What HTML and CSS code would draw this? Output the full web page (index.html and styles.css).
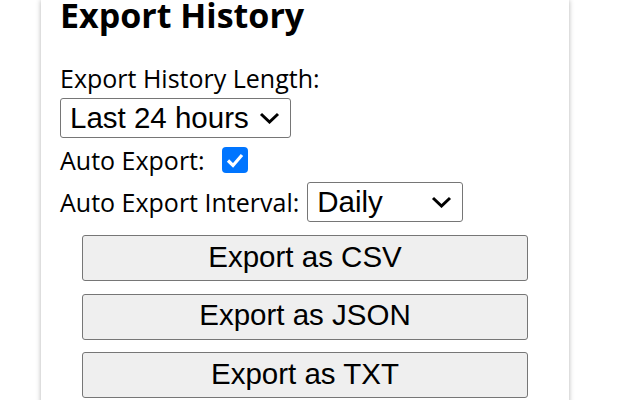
FILE: index.html
```html
<!DOCTYPE html>
<html lang="en">
<head>
<meta charset="utf-8">
<title>Export History</title>
<link rel="stylesheet" href="styles.css">
</head>
<body>
<div class="panel">
  <h2 class="title">Export History</h2>
  <div class="field">
    <label class="lbl">Export History Length:</label>
    <span class="select sel-length">
      <span class="sel-text">Last 24 hours</span>
      <svg class="chev" viewBox="0 0 21 12" width="21" height="12"><path d="M2 2 L10.5 10 L19 2" fill="none" stroke="#000" stroke-width="3"/></svg>
    </span>
  </div>
  <div class="row row-check">
    <label class="lbl">Auto Export:</label>
    <span class="cb">
      <svg viewBox="0 0 26 26" width="26" height="26"><rect x="0" y="0" width="26" height="26" rx="4" fill="#0075ff"/><path d="M6 13.5 L11 18.5 L20 8" fill="none" stroke="#fff" stroke-width="3.2"/></svg>
    </span>
  </div>
  <div class="row row-interval">
    <label class="lbl">Auto Export Interval:</label>
    <span class="select sel-interval">
      <span class="sel-text">Daily</span>
      <svg class="chev" viewBox="0 0 21 12" width="21" height="12"><path d="M2 2 L10.5 10 L19 2" fill="none" stroke="#000" stroke-width="3"/></svg>
    </span>
  </div>
  <div class="buttons">
    <button class="btn">Export as CSV</button>
    <button class="btn">Export as JSON</button>
    <button class="btn">Export as TXT</button>
  </div>
</div>
</body>
</html>
```
FILE: styles.css
```css
html, body {
  margin: 0;
  padding: 0;
  background: #fff;
}
body {
  font-family: "Open Sans", "Noto Sans", sans-serif;
  color: #000;
  height: 400px;
  overflow: hidden;
}
.panel {
  margin-left: 41px;
  width: 528px;
  height: 420px;
  padding: 0 19px;
  box-sizing: border-box;
  background: #fff;
  box-shadow: 0 0 5px rgba(0, 0, 0, 0.3);
}
.title {
  margin: 0;
  font-size: 34px;
  font-weight: 700;
  line-height: 30px;
  padding-top: 0;
}
.lbl {
  font-size: 25px;
  line-height: 30px;
  white-space: nowrap;
}
.field {
  margin-top: 33px;
  display: flex;
  flex-direction: column;
  align-items: flex-start;
}
.select {
  display: inline-flex;
  align-items: center;
  justify-content: space-between;
  box-sizing: border-box;
  height: 40px;
  border: 1px solid #767676;
  border-radius: 3px;
  background: #fff;
  font-family: "Liberation Sans", Arial, sans-serif;
  font-size: 29.5px;
  line-height: 33px;
  padding: 0 10px 2px 9px;
}
.sel-length {
  margin-top: 5px;
  width: 231px;
}
.sel-interval {
  width: 156px;
  margin-left: 8px;
}
.chev {
  display: block;
  margin-top: 2px;
}
.row {
  display: flex;
  align-items: center;
}
.row-check {
  margin-top: 7px;
  height: 30px;
}
.cb {
  display: block;
  margin-left: 17px;
  height: 26px;
}
.cb svg {
  display: block;
}
.row-interval {
  margin-top: 7px;
  height: 40px;
}
.buttons {
  margin-top: 13px;
  display: flex;
  flex-direction: column;
  align-items: center;
  gap: 12.5px;
}
.btn {
  width: 446px;
  height: 46px;
  box-sizing: border-box;
  border: 1px solid #767676;
  border-radius: 3px;
  background: #efefef;
  color: #000;
  font-family: "Liberation Sans", Arial, sans-serif;
  font-size: 29.5px;
  line-height: 33px;
  padding: 0 0 4px;
  margin: 0;
}
```
